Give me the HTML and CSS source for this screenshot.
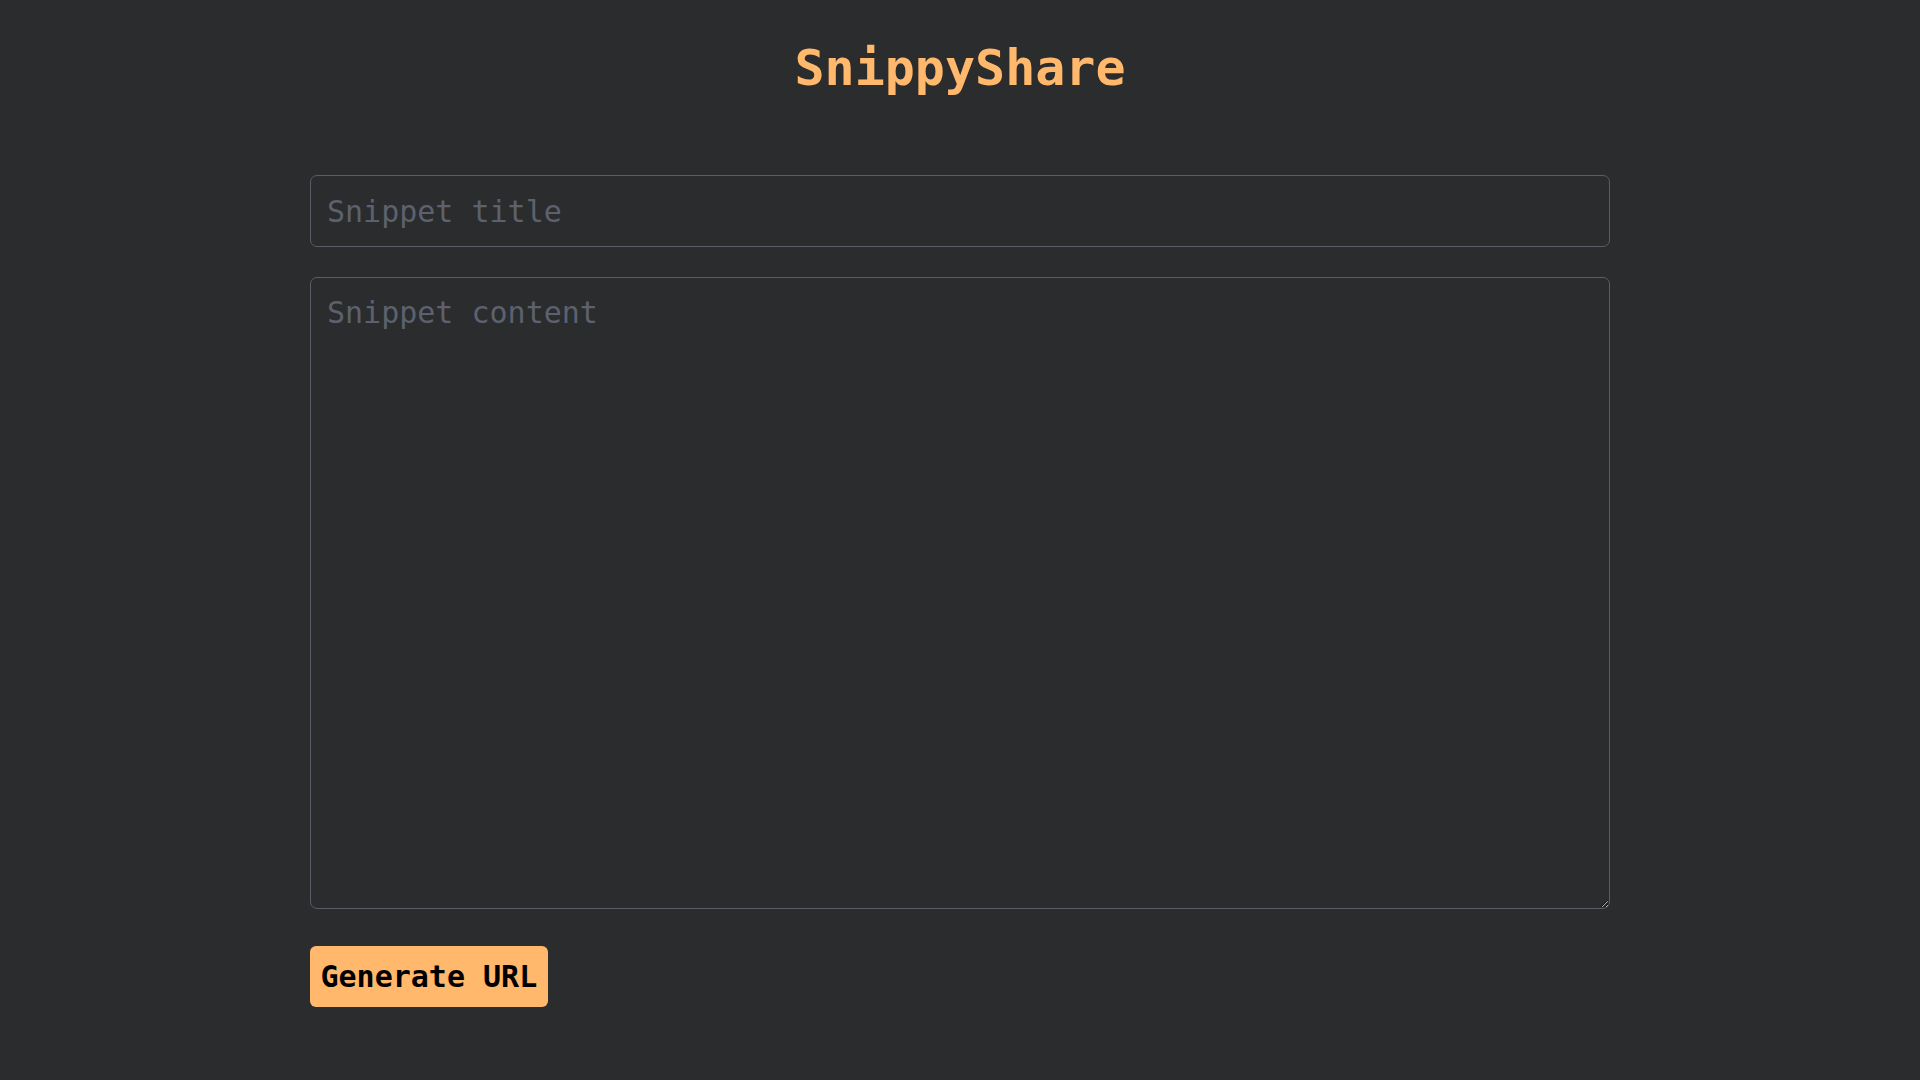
FILE: index.html
```html
<!DOCTYPE html>
<html lang="en">
<head>
<meta charset="utf-8">
<title>SnippyShare</title>
<link rel="stylesheet" href="styles.css">
</head>
<body>
<main class="page">
  <h1 class="title">SnippyShare</h1>
  <form class="form">
    <input class="field field-title" type="text" placeholder="Snippet title">
    <textarea class="field field-content" placeholder="Snippet content"></textarea>
    <div class="actions">
      <button class="btn" type="button">Generate URL</button>
    </div>
  </form>
</main>
</body>
</html>
```
FILE: styles.css
```css
html, body {
  margin: 0;
  padding: 0;
  background: #2b2c2e;
  height: 100%;
}
body {
  font-family: "DejaVu Sans Mono", "Liberation Mono", monospace;
  color: #d8d8d8;
}
.page {
  width: 1300px;
  margin: 0 auto;
  padding-top: 38px;
  display: flex;
  flex-direction: column;
}
.title {
  margin: 0;
  text-align: center;
  font-size: 50px;
  line-height: 60px;
  font-weight: bold;
  color: #ffb86c;
}
.form {
  margin-top: 77px;
  display: flex;
  flex-direction: column;
  gap: 30px;
}
.field {
  box-sizing: border-box;
  width: 100%;
  background: #2b2c2e;
  border: 1px solid #5b5c66;
  border-radius: 7px;
  color: #d8d8d8;
  font-family: "DejaVu Sans Mono", "Liberation Mono", monospace;
  font-size: 30px;
  outline: none;
  margin: 0;
}
.field::placeholder {
  color: #5d616e;
  opacity: 1;
}
.field-title {
  height: 72px;
  padding: 0 16px;
}
.field-content {
  height: 632px;
  padding: 17px 16px;
  resize: vertical;
  display: block;
}
.actions {
  margin-top: 7px;
  display: flex;
}
.btn {
  height: 61px;
  padding: 0 10.5px;
  background: #ffb86c;
  color: #000;
  border: none;
  border-radius: 6px;
  font-family: "DejaVu Sans Mono", "Liberation Mono", monospace;
  font-size: 30px;
  font-weight: bold;
  cursor: pointer;
}
```
